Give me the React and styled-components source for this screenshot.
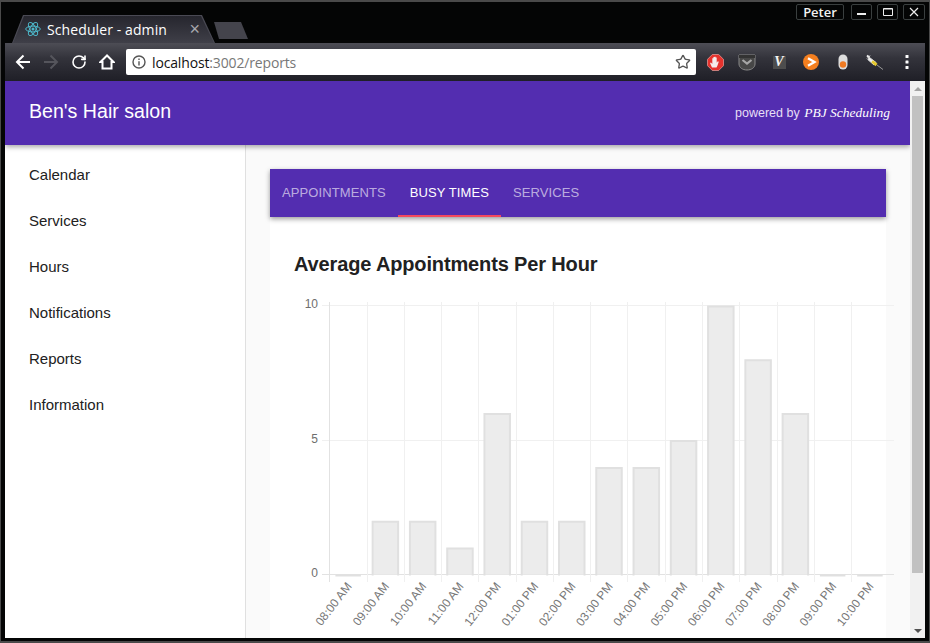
import React from "react";
import styled, { createGlobalStyle } from "styled-components";
import { RotateCw, Star } from "lucide-react";

const GlobalStyle = createGlobalStyle`
  html, body {
    margin: 0;
    padding: 0;
    background: #000;
    overflow: hidden;
  }
  * {
    box-sizing: border-box;
  }
`;

const navItems = [
  "Calendar",
  "Services",
  "Hours",
  "Notifications",
  "Reports",
  "Information",
];

const tabs = [
  { label: "Appointments" },
  { label: "Busy Times", active: true },
  { label: "Services" },
];

const hours = [
  { label: "08:00 AM", value: 0 },
  { label: "09:00 AM", value: 2 },
  { label: "10:00 AM", value: 2 },
  { label: "11:00 AM", value: 1 },
  { label: "12:00 PM", value: 6 },
  { label: "01:00 PM", value: 2 },
  { label: "02:00 PM", value: 2 },
  { label: "03:00 PM", value: 4 },
  { label: "04:00 PM", value: 4 },
  { label: "05:00 PM", value: 5 },
  { label: "06:00 PM", value: 10 },
  { label: "07:00 PM", value: 8 },
  { label: "08:00 PM", value: 6 },
  { label: "09:00 PM", value: 0 },
  { label: "10:00 PM", value: 0 },
];

// chart geometry, in page pixels (the viewBox starts at the svg's page position)
const plotLeft = 329.3;
const plotRight = 894;
const step = 37.27;
const barWidth = 25.5;
const zeroY = 574.5;
const unit = 26.9;

function BarChart() {
  return (
    <ChartSvg viewBox="294 295 600 343" width="600" height="343">
      {[10, 5, 0].map((tick) => {
        const y = Math.floor(zeroY - tick * unit) + 0.5;
        return (
          <g key={tick}>
            <line
              x1="322"
              x2={plotRight}
              y1={y}
              y2={y}
              stroke={tick === 0 ? "#e2e2e2" : "#f0f0f0"}
            />
            <text x="318" y={y + 2} textAnchor="end" fontSize="12" fill="#6e6e6e">
              {tick}
            </text>
          </g>
        );
      })}
      {hours.map((hour, i) => {
        const x = Math.round(plotLeft + i * step) + 0.5;
        return (
          <line
            key={hour.label}
            x1={x}
            x2={x}
            y1="302"
            y2="582"
            stroke={i === 0 ? "#e2e2e2" : "#f0f0f0"}
          />
        );
      })}
      {hours.map((hour, i) => {
        const x = plotLeft + i * step + (step - barWidth) / 2 + 0.2;
        const top = zeroY - hour.value * unit + 1;
        return (
          <g key={hour.label}>
            {hour.value > 0 && (
              <rect
                x={x}
                y={top}
                width={barWidth}
                height={zeroY - top}
                fill="#ececec"
              />
            )}
            <path
              d={`M${x} ${zeroY + 1}V${top}H${x + barWidth}V${zeroY + 1}`}
              fill="none"
              stroke="#e0e0e0"
              strokeWidth="2"
            />
          </g>
        );
      })}
      {hours.map((hour, i) => {
        const x = plotLeft + i * step + 20;
        return (
          <text
            key={hour.label}
            x={x}
            y="588"
            textAnchor="end"
            fontSize="12"
            fill="#777"
            transform={`rotate(-52 ${x} 584)`}
          >
            {hour.label}
          </text>
        );
      })}
    </ChartSvg>
  );
}

function ReactLogo() {
  return (
    <svg width="16" height="16" viewBox="0 0 16 16" fill="none" stroke="#4db6c8">
      <circle cx="8" cy="8" r="1.5" fill="#4db6c8" stroke="none" />
      <ellipse cx="8" cy="8" rx="7.3" ry="2.9" />
      <ellipse cx="8" cy="8" rx="7.3" ry="2.9" transform="rotate(60 8 8)" />
      <ellipse cx="8" cy="8" rx="7.3" ry="2.9" transform="rotate(120 8 8)" />
    </svg>
  );
}

function ArrowBack({ color }) {
  return (
    <svg width="16" height="16" viewBox="0 0 16 16" fill="none" stroke={color} strokeWidth="2">
      <path d="M15 8H2M8.5 1.5 2 8l6.5 6.5" />
    </svg>
  );
}

function ArrowForward({ color }) {
  return (
    <svg width="16" height="16" viewBox="0 0 16 16" fill="none" stroke={color} strokeWidth="2">
      <path d="M1 8h13M7.5 1.5 14 8l-6.5 6.5" />
    </svg>
  );
}

function HomeIcon() {
  return (
    <svg width="16" height="16" viewBox="0 0 16 16" fill="none" stroke="#fff" strokeWidth="2">
      <path d="M8 1.5 1.5 8H3.5v6.5h9V8h2z" />
    </svg>
  );
}

function InfoIcon() {
  return (
    <svg width="14" height="14" viewBox="0 0 14 14" fill="none" stroke="#555" strokeWidth="1.4">
      <circle cx="7" cy="7" r="6" />
      <path d="M7 6.2V10.4M7 3.6v1.5" />
    </svg>
  );
}

function StopHand() {
  return (
    <svg width="17" height="17" viewBox="0 0 17 17">
      <path
        d="M5.3.5h6.4l4.8 4.8v6.4l-4.8 4.8H5.3L.5 11.7V5.3z"
        fill="#e5322d"
        stroke="#f7b5b2"
        strokeWidth=".6"
      />
      <path
        d="M5 13.5 3 9l1-.5 1.3 1.4V4.2h1.1V3h1.1v-.3h1.1v.8h1.100v5.300l1.100-1.500 1 .5-1.500 4.200-.8 1.500H5.800z"
        fill="#f4ecec"
      />
    </svg>
  );
}

function PocketIcon() {
  return (
    <svg width="18" height="17" viewBox="0 0 18 17">
      <path d="M1 1h16v9c0 3.500-3.500 6-8 6s-8-2.500-8-6z" fill="#474747" stroke="#8a8a8a" />
      <path d="M1 1h16v3H1z" fill="#333" />
      <path d="M4.500 6 9 9.500 13.500 6" fill="none" stroke="#a6a6a6" strokeWidth="2.200" />
    </svg>
  );
}

function PlayCircle() {
  return (
    <svg width="16" height="16" viewBox="0 0 16 16">
      <circle cx="8" cy="8" r="8" fill="#f47f1f" />
      <path d="M5 4.200 11.500 8 5 11.800" fill="none" stroke="#fff" strokeWidth="2.300" />
    </svg>
  );
}

function PillIcon() {
  return (
    <svg width="10" height="16" viewBox="0 0 10 16">
      <rect x=".5" y=".5" width="9" height="15" rx="4.500" fill="#ddd" />
      <circle cx="5" cy="10.500" r="3.200" fill="#f07a22" />
    </svg>
  );
}

function SyringeIcon() {
  return (
    <svg width="18" height="16" viewBox="0 0 18 16">
      <path d="M1 1.500 3.500 3.500" stroke="#eee" strokeWidth="2" />
      <path d="M1 4.500 4 1.500M3.500 3.500 10 8.500 8 11 1.800 5.500z" fill="#eee" stroke="#ddd" />
      <path d="M7 6.200 11.500 9.800 9.500 12.200 5.200 8.300z" fill="#e6c92e" />
      <path d="M11 11 17 15.500" stroke="#999" />
    </svg>
  );
}

function MenuDots() {
  return (
    <svg width="4" height="14" viewBox="0 0 4 14" fill="#fff">
      <rect x=".5" width="3" height="3" rx=".5" />
      <rect x=".5" y="5.500" width="3" height="3" rx=".5" />
      <rect x=".5" y="11" width="3" height="3" rx=".5" />
    </svg>
  );
}

export default function App() {
  return (
    <Window>
      <GlobalStyle />
      <TitleBar>
        <Tab>
          <TabIcon>
            <ReactLogo />
          </TabIcon>
          <TabTitle>Scheduler - admin</TabTitle>
          <TabClose>×</TabClose>
        </Tab>
        <NewTab />
        <WindowControls>
          <UserButton>Peter</UserButton>
          <ControlButton>
            <svg width="12" height="12" viewBox="0 0 12 12" stroke="#eee" strokeWidth="2">
              <path d="M1 8h9" />
            </svg>
          </ControlButton>
          <ControlButton>
            <svg width="12" height="12" viewBox="0 0 12 12" fill="none" stroke="#eee">
              <path d="M1.500 2.500h9v7h-9zM1.500 3h9" />
            </svg>
          </ControlButton>
          <ControlButton $wide>
            <svg width="12" height="12" viewBox="0 0 12 12" stroke="#eee" strokeWidth="1.200">
              <path d="M2 2l8 8M10 2l-8 8" />
            </svg>
          </ControlButton>
        </WindowControls>
      </TitleBar>
      <Toolbar>
        <NavButton>
          <ArrowBack color="#fff" />
        </NavButton>
        <NavButton>
          <ArrowForward color="#55555c" />
        </NavButton>
        <NavButton>
          <RotateCw size={16} color="#fff" strokeWidth={2.4} />
        </NavButton>
        <NavButton>
          <HomeIcon />
        </NavButton>
        <AddressBar>
          <InfoIcon />
          <Url>
            localhost<UrlRest>:3002/reports</UrlRest>
          </Url>
          <StarSlot>
            <Star size={16} color="#555" strokeWidth={2} />
          </StarSlot>
        </AddressBar>
        <Extensions>
          <ExtensionSlot>
            <StopHand />
          </ExtensionSlot>
          <ExtensionSlot>
            <PocketIcon />
          </ExtensionSlot>
          <ExtensionSlot>
            <VimBox>V</VimBox>
          </ExtensionSlot>
          <ExtensionSlot>
            <PlayCircle />
          </ExtensionSlot>
          <ExtensionSlot>
            <PillIcon />
          </ExtensionSlot>
          <ExtensionSlot>
            <SyringeIcon />
          </ExtensionSlot>
          <ExtensionSlot>
            <MenuDots />
          </ExtensionSlot>
        </Extensions>
      </Toolbar>
      <Viewport>
        <Page>
          <AppBar>
            <Brand>Ben's Hair salon</Brand>
            <Powered>
              powered by <PoweredName>PBJ Scheduling</PoweredName>
            </Powered>
          </AppBar>
          <Body>
            <Sidebar>
              {navItems.map((item) => (
                <NavItem key={item}>{item}</NavItem>
              ))}
            </Sidebar>
            <Main>
              <TabBar>
                {tabs.map((tab) => (
                  <TabLink key={tab.label} $active={tab.active}>
                    {tab.label}
                  </TabLink>
                ))}
              </TabBar>
              <Card>
                <CardTitle>Average Appointments Per Hour</CardTitle>
                <BarChart />
              </Card>
            </Main>
          </Body>
        </Page>
        <Scrollbar>
          <ScrollArrow>
            <ArrowUp />
          </ScrollArrow>
          <ScrollThumb />
          <ScrollTrack />
          <ScrollArrow>
            <ArrowDown />
          </ScrollArrow>
        </Scrollbar>
      </Viewport>
    </Window>
  );
}

const Window = styled.div`
  width: 930px;
  height: 643px;
  display: flex;
  flex-direction: column;
  padding: 0 4px 3px;
  background: #040505;
  border: 1px solid #4a4a4a;
  border-width: 2px 1px 2px 1px;
  overflow: hidden;
  font-family: "Liberation Sans", Arial, sans-serif;
`;
const TitleBar = styled.div`
  height: 41px;
  flex: none;
  display: flex;
  align-items: flex-end;
  padding-left: 7px;
`;
const Tab = styled.div`
  position: relative;
  width: 203px;
  height: 28px;
  display: flex;
  align-items: center;
  padding: 0 15px 0 13px;
  background: #4a4a54;
  clip-path: polygon(0 100%, 11px 0, 190px 0, 100% 100%);
  color: #fff;
  font-family: "Open Sans", sans-serif;
  font-size: 14px;
  &::before {
    content: "";
    position: absolute;
    inset: 1px 0 0;
    background: linear-gradient(#26262e, #3f3f48);
    clip-path: polygon(1px 100%, 12px 0, 189px 0, calc(100% - 1px) 100%);
  }
`;
const TabIcon = styled.span`
  position: relative;
  width: 16px;
  height: 16px;
  margin-right: 6px;
  display: flex;
`;
const TabTitle = styled.span`
  position: relative;
  flex: 1;
  white-space: nowrap;
  letter-spacing: 0.1px;
`;
const TabClose = styled.span`
  position: relative;
  color: #a8a8ae;
  font-size: 18px;
  line-height: 18px;
  font-family: "Liberation Sans", sans-serif;
`;
const NewTab = styled.div`
  width: 34px;
  height: 17px;
  margin: 0 0 4px -1px;
  background: #44444c;
  clip-path: polygon(5px 100%, 0 0, 27px 0, 100% 100%);
`;
const WindowControls = styled.div`
  margin-left: auto;
  align-self: flex-start;
  margin-top: 2px;
  display: flex;
  gap: 5px;
`;
const UserButton = styled.div`
  width: 48px;
  height: 16px;
  margin-right: 2px;
  display: flex;
  align-items: center;
  justify-content: center;
  border: 1px solid #3a3f3f;
  border-radius: 2px;
  color: #f2f2f2;
  font-family: "Open Sans", sans-serif;
  font-size: 13px;
  font-weight: 600;
`;
const ControlButton = styled.div`
  width: ${(p) => (p.$wide ? "22px" : "21px")};
  height: 16px;
  display: flex;
  align-items: center;
  justify-content: center;
  border: 1px solid #3a3f3f;
  border-radius: 2px;
`;
const Toolbar = styled.div`
  height: 38px;
  flex: none;
  display: flex;
  align-items: center;
  padding-left: 4px;
  background: linear-gradient(#4d4d55, #33333b 40%, #1f1f27);
`;
const NavButton = styled.div`
  width: 28px;
  height: 28px;
  display: flex;
  align-items: center;
  justify-content: center;
`;
const AddressBar = styled.div`
  width: 570px;
  height: 26px;
  margin-left: 5px;
  padding: 0 5px 0 6px;
  display: flex;
  align-items: center;
  background: #fff;
  border-radius: 2px;
`;
const Url = styled.span`
  flex: 1;
  margin-left: 6px;
  color: #111;
  font-family: "Open Sans", sans-serif;
  font-size: 14px;
  letter-spacing: -0.15px;
`;
const UrlRest = styled.span`
  color: #777;
`;
const StarSlot = styled.span`
  display: flex;
`;
const Extensions = styled.div`
  margin-left: 3px;
  display: flex;
`;
const ExtensionSlot = styled.div`
  width: 32px;
  height: 26px;
  display: flex;
  align-items: center;
  justify-content: center;
`;
const VimBox = styled.div`
  width: 13px;
  height: 13px;
  display: flex;
  align-items: center;
  justify-content: center;
  background: #4d4d4d;
  color: #f5f5f5;
  font-family: "Liberation Serif", serif;
  font-size: 14px;
  font-style: italic;
  font-weight: bold;
`;
const Viewport = styled.div`
  flex: 1;
  min-height: 0;
  display: flex;
`;
const Page = styled.div`
  flex: 1;
  min-width: 0;
  display: flex;
  flex-direction: column;
  background: #fff;
  overflow: hidden;
`;
const AppBar = styled.div`
  position: relative;
  height: 64px;
  flex: none;
  display: flex;
  align-items: center;
  justify-content: space-between;
  padding: 0 20px 4px 24px;
  background: #532db0;
  color: #fff;
  box-shadow: 0 2px 5px rgba(0, 0, 0, 0.35);
`;
const Brand = styled.div`
  font-size: 19.6px;
  padding-top: 1px;
`;
const Powered = styled.div`
  font-size: 12.5px;
  color: #e6dff5;
  padding-top: 4px;
`;
const PoweredName = styled.span`
  margin-left: 1px;
  color: #fff;
  font-family: "Liberation Serif", serif;
  font-size: 13.5px;
  font-style: italic;
`;
const Body = styled.div`
  flex: 1;
  min-height: 0;
  display: flex;
`;
const Sidebar = styled.nav`
  width: 241px;
  flex: none;
  padding-top: 6px;
  border-right: 1px solid #e0e0e0;
  background: #fff;
`;
const NavItem = styled.div`
  height: 46px;
  display: flex;
  align-items: center;
  padding-left: 24px;
  color: #212121;
  font-size: 15px;
`;
const Main = styled.main`
  flex: 1;
  min-width: 0;
  padding: 24px 24px 0;
  display: flex;
  flex-direction: column;
  background: #fafafa;
  overflow: hidden;
`;
const TabBar = styled.div`
  position: relative;
  height: 48px;
  flex: none;
  display: flex;
  background: #532db0;
  box-shadow: 0 2px 5px rgba(0, 0, 0, 0.4);
`;
const TabLink = styled.div`
  height: 48px;
  padding: 0 12px;
  display: flex;
  align-items: center;
  text-transform: uppercase;
  font-size: 13px;
  letter-spacing: 0.1px;
  color: ${(p) => (p.$active ? "#fff" : "rgba(255, 255, 255, 0.62)")};
  border-bottom: 2px solid ${(p) => (p.$active ? "#f5495e" : "transparent")};
`;
const Card = styled.section`
  flex: 1;
  padding: 35px 24px 0;
  background: #fff;
`;
const CardTitle = styled.h2`
  margin: 0 0 19px;
  color: #212121;
  font-size: 20px;
  line-height: 24px;
  font-weight: bold;
  letter-spacing: -0.14px;
`;
const ChartSvg = styled.svg`
  display: block;
  flex: none;
  overflow: hidden;
  font-family: "Liberation Sans", Arial, sans-serif;
`;
const Scrollbar = styled.div`
  width: 15px;
  flex: none;
  display: flex;
  flex-direction: column;
  background: #f1f1f1;
`;
const ScrollArrow = styled.div`
  height: 15px;
  flex: none;
  display: flex;
  align-items: center;
  justify-content: center;
`;
const ArrowUp = styled.div`
  width: 0;
  height: 0;
  border: 4px solid transparent;
  border-top: 0;
  border-bottom: 4px solid #a3a3a3;
`;
const ArrowDown = styled.div`
  width: 0;
  height: 0;
  border: 4px solid transparent;
  border-bottom: 0;
  border-top: 4px solid #505050;
`;
const ScrollThumb = styled.div`
  height: 477px;
  flex: none;
  margin: 0 2px;
  background: #c1c1c1;
`;
const ScrollTrack = styled.div`
  flex: 1;
`;
